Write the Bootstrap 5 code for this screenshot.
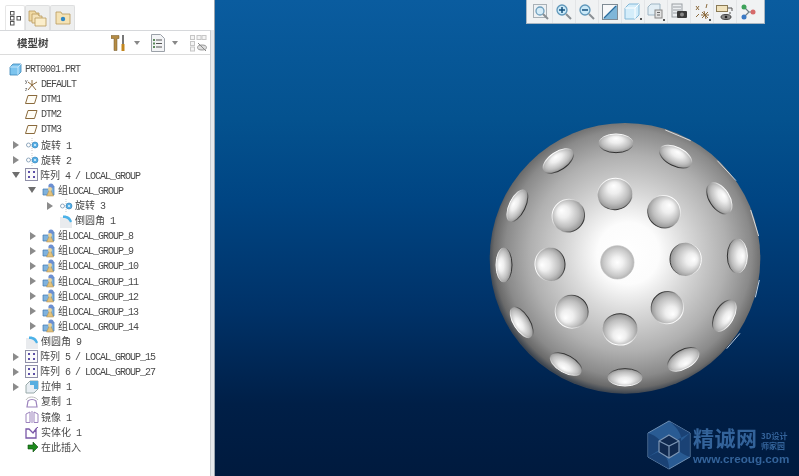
<!doctype html>
<html lang="zh"><head><meta charset="utf-8">
<link href="https://cdn.jsdelivr.net/npm/bootstrap@5.3.0/dist/css/bootstrap.min.css" rel="stylesheet">
<style>
html,body{height:100%;margin:0;overflow:hidden}
.app-shell{width:799px;height:476px;background:#fff}
.side-pane{width:215px;background:#e6e9ec;border-right:1px solid #9aa4ae}
.tab-strip{height:30px;padding:5px 0 0 5px;background:#fff}
.tab-item{width:25px;height:25px;background:#eeefef;border:1px solid #dedfe0;border-bottom:0;border-radius:2px 2px 0 0}
.tab-item.on{width:20px;background:#fff;border-color:#e6e6e6}
.pane-body{background:#fff;border-top:1px solid #d6d8db;border-right:1px solid #c9cdd1;margin-right:3px}
.head-row{height:24px;border-bottom:1px solid #dcdcdc;padding:0 3px 0 17px}
.head-title{font:700 10.5px "Noto Sans CJK SC",sans-serif;color:#444;filter:blur(.3px)}
.caret-mini{width:0;height:0;border:3px solid transparent;border-top:4px solid #888;border-bottom:0}
.gap-a{margin-right:8px}.gap-b{margin-right:11px}.gap-c{margin-right:7px}.gap-d{margin-right:11px}
.tree-list{padding-top:7px;filter:blur(.35px)}
.tree-row{height:15.12px;white-space:pre}
.lbl{font:10px/15px "Liberation Mono",monospace;letter-spacing:-1px;color:#4a4a4a}
.cjk{font:10px/15px "Noto Sans CJK SC",sans-serif;letter-spacing:0;color:#4a4a4a}
.twist{width:8px;flex:none}
.ico{flex:none}
.pad-root{padding-left:9px}.pad-icon{padding-left:25px}.pad-a{padding-left:13px}.pad-b{padding-left:30px}.pad-c{padding-left:47px}.pad-d{padding-left:59px}.pad-e{padding-left:28px}.pad-f{padding-left:12px}.pad-g{padding-left:27px}
.mr-1px{margin-right:1px}.mr-2px{margin-right:2px}.mr-3px{margin-right:3px}
.ml-4px{margin-left:4px}.ml-5px{margin-left:5px}.ml-6px{margin-left:6px}
.view-pane{position:relative;background:linear-gradient(#0a5c9f 0,#04528f 25%,#004583 42%,#003268 65%,#001f47 85%,#001a3e 100%);overflow:hidden}
.tool-box{position:absolute;left:311px;top:-1px;width:239px;height:25px;background:#f0f2f3;border:1px solid #a9b6c2;padding:0 3px}
.tool-btn{width:23px;height:23px;border-right:1px solid #e3e5e7;flex:none}
.tool-btn svg{filter:blur(.25px)}
.ball{position:absolute;left:265px;top:120px;filter:blur(.5px)}
.brand{position:absolute;left:431px;top:420px;width:150px;height:50px;filter:blur(.3px)}
.brand-mark{position:absolute;left:0;top:0}
.brand-big{position:absolute;left:47px;top:5px;font:700 21px/24px "Noto Sans CJK SC",sans-serif;color:#33639a;white-space:nowrap;letter-spacing:.5px}
.brand-small{position:absolute;left:115px;top:11px;font:700 8px/10px "Noto Sans CJK SC",sans-serif;color:#33639a;white-space:nowrap}
.brand-url{position:absolute;left:47px;top:33px;font:700 11.7px/12px "Liberation Sans",sans-serif;color:#33639a}
</style></head><body>
<svg width="0" height="0" class="position-absolute"><defs>
<g id="i-grp"><path d="M1 6h6l2-3h3v9H1z" fill="#7fb2dd" stroke="#3f77b0" stroke-width=".7"/><circle cx="9" cy="3" r="2.6" fill="#6c8fd2"/><path d="M8 5.500l3.500 7.500H4.500z" fill="#e1c17c" stroke="#a88a4e" stroke-width=".5"/><circle cx="8" cy="6" r="2" fill="#e9d39b"/></g>
<g id="i-rev"><path d="M7 0v14" stroke="#bbb" stroke-dasharray="1 1" stroke-width=".8"/><circle cx="3.500" cy="7" r="2" fill="none" stroke="#8fa7bd"/><circle cx="10" cy="7" r="3" fill="#57aee3" stroke="#2d80bb" stroke-width=".6"/><circle cx="10" cy="7" r="1" fill="#e8f6ff"/></g>
<g id="i-pat"><rect x=".5" y=".5" width="12" height="12" fill="#fafafa" stroke="#8f8fa8"/><g fill="#5d4fa8"><rect x="3" y="3" width="2" height="2"/><rect x="8" y="3" width="2" height="2"/><rect x="3" y="8" width="2" height="2"/><rect x="8" y="8" width="2" height="2"/></g></g>
<g id="i-rnd"><path d="M1 3h6c3 0 5 2 6 5v6H1z" fill="#e9ebee"/><path d="M4 1.500c4-.5 8 1.500 9 6l-2 1C10 6 8 4 4 4z" fill="#4cb2e8"/></g>
<g id="i-tw"><path d="M0 0l6 4-6 4z" fill="#8b8b8b"/></g>
<g id="i-td"><path d="M0 1h8l-4 6z" fill="#6e6e6e"/></g>
<g id="i-pln"><path d="M3 1.500h9l-2.500 8h-9z" fill="#fffdf6" stroke="#8a6a3c"/></g>
</defs></svg>
<div class="app-shell d-flex">
 <div class="side-pane d-flex flex-column flex-shrink-0">
  <div class="tab-strip d-flex">
   <div class="tab-item on d-flex align-items-center justify-content-center"><svg width="13" height="16"><g fill="#fff" stroke="#555"><rect x="1.500" y="1.500" width="3.500" height="3.500"/><rect x="1.500" y="6.500" width="3.500" height="3.500"/><rect x="1.500" y="11.500" width="3.500" height="3.500"/><rect x="8" y="6.500" width="3.500" height="3.500"/></g></svg></div>
   <div class="tab-item d-flex align-items-center justify-content-center"><svg width="19" height="18"><path d="M1 2h6l1 2h3v8H1z" fill="#f0d9a3" stroke="#b99a5a" stroke-width=".8"/><path d="M4 5h6l1 2h3v7H4z" fill="#f4e2b8" stroke="#b99a5a" stroke-width=".8"/><path d="M7 9h11v8H7z" fill="#fbeecb" stroke="#b99a5a" stroke-width=".8"/></svg></div>
   <div class="tab-item d-flex align-items-center justify-content-center"><svg width="16" height="14"><path d="M1 1h5l1 2h8v10H1z" fill="#f5e3b5" stroke="#b99a5a" stroke-width=".8"/><circle cx="8" cy="8" r="2.200" fill="#2f87c5"/></svg></div>
  </div>
  <div class="pane-body flex-grow-1">
   <div class="head-row d-flex align-items-center">
    <span class="head-title flex-grow-1">模型树</span>
    <svg class="gap-a" width="15" height="18"><path d="M0 1.500h8v3H6v12H3V4.500H0z" fill="#b58c45" stroke="#6e5426" stroke-width=".5"/><path d="M11 1h2v9h-2z" fill="#777"/><path d="M10.500 10h3v7h-3z" fill="#c2861e"/></svg>
    <span class="caret-mini gap-b"></span>
    <svg class="gap-c" width="14" height="18"><path d="M.5.500h9l4 4v13H.5z" fill="#f3f4f6" stroke="#9ba1a8"/><path d="M5 6h6M5 9.500h6M5 13h6" stroke="#555"/><g fill="#5c8a5c"><rect x="2" y="5" width="2" height="2"/><rect x="2" y="8.500" width="2" height="2"/><rect x="2" y="12" width="2" height="2"/></g></svg>
    <span class="caret-mini gap-d"></span>
    <svg width="18" height="18"><g fill="#f4f4f4" stroke="#c6c6c6"><rect x="1.500" y="1.500" width="4" height="4"/><rect x="1.500" y="7.500" width="4" height="4"/><rect x="1.500" y="13" width="4" height="4"/><rect x="8" y="1.500" width="4" height="4"/><rect x="13" y="1.500" width="4" height="4"/></g><ellipse cx="13" cy="13.500" rx="4.500" ry="2.500" fill="#ddd" stroke="#999"/><path d="M9 9l8 8" stroke="#888"/></svg>
   </div>
   <div class="tree-list">
    <div class="tree-row pad-root d-flex align-items-center"><svg class="ico mr-3px" width="13" height="13"><path d="M1 4l3-3h8v8l-3 3H1z" fill="#7cc4ee" stroke="#3b87b7" stroke-width=".8"/><path d="M1 4h8v8M9 4l3-3" fill="none" stroke="#d5efff" stroke-width=".8"/></svg><span class="lbl">PRT0001.PRT</span></div>
    <div class="tree-row pad-icon d-flex align-items-center"><svg class="ico mr-1px" width="15" height="14"><path d="M7 2l0 5-4 5M7 7l5-3M7 7l4 5M3 4l4 3" stroke="#8b6a3d" fill="none"/><text x="0" y="5" font-size="5" fill="#444">y</text><text x="0" y="13" font-size="5" fill="#444">z</text></svg><span class="lbl">DEFAULT</span></div>
    <div class="tree-row pad-icon d-flex align-items-center"><svg class="ico mr-2px" width="14" height="11"><use href="#i-pln"/></svg><span class="lbl">DTM1</span></div>
    <div class="tree-row pad-icon d-flex align-items-center"><svg class="ico mr-2px" width="14" height="11"><use href="#i-pln"/></svg><span class="lbl">DTM2</span></div>
    <div class="tree-row pad-icon d-flex align-items-center"><svg class="ico mr-2px" width="14" height="11"><use href="#i-pln"/></svg><span class="lbl">DTM3</span></div>
    <div class="tree-row pad-a d-flex align-items-center"><svg class="twist" height="8"><use href="#i-tw"/></svg><svg class="ico ml-4px mr-2px" width="14" height="14"><use href="#i-rev"/></svg><span class="lbl"><span class="cjk">旋转</span> 1</span></div>
    <div class="tree-row pad-a d-flex align-items-center"><svg class="twist" height="8"><use href="#i-tw"/></svg><svg class="ico ml-4px mr-2px" width="14" height="14"><use href="#i-rev"/></svg><span class="lbl"><span class="cjk">旋转</span> 2</span></div>
    <div class="tree-row pad-f d-flex align-items-center"><svg class="twist" height="8"><use href="#i-td"/></svg><svg class="ico ml-5px mr-1px" width="14" height="14"><use href="#i-pat"/></svg><span class="lbl"><span class="cjk">阵列</span> 4 / LOCAL_GROUP</span></div>
    <div class="tree-row pad-e d-flex align-items-center"><svg class="twist" height="8"><use href="#i-td"/></svg><svg class="ico ml-6px mr-2px" width="14" height="14"><use href="#i-grp"/></svg><span class="lbl"><span class="cjk">组</span>LOCAL_GROUP</span></div>
    <div class="tree-row pad-c d-flex align-items-center"><svg class="twist" height="8"><use href="#i-tw"/></svg><svg class="ico ml-4px mr-2px" width="14" height="14"><use href="#i-rev"/></svg><span class="lbl"><span class="cjk">旋转</span> 3</span></div>
    <div class="tree-row pad-d d-flex align-items-center"><svg class="ico mr-2px" width="14" height="14"><use href="#i-rnd"/></svg><span class="lbl"><span class="cjk">倒圆角</span> 1</span></div>
    <div class="tree-row pad-b d-flex align-items-center"><svg class="twist" height="8"><use href="#i-tw"/></svg><svg class="ico ml-4px mr-2px" width="14" height="14"><use href="#i-grp"/></svg><span class="lbl"><span class="cjk">组</span>LOCAL_GROUP_8</span></div>
    <div class="tree-row pad-b d-flex align-items-center"><svg class="twist" height="8"><use href="#i-tw"/></svg><svg class="ico ml-4px mr-2px" width="14" height="14"><use href="#i-grp"/></svg><span class="lbl"><span class="cjk">组</span>LOCAL_GROUP_9</span></div>
    <div class="tree-row pad-b d-flex align-items-center"><svg class="twist" height="8"><use href="#i-tw"/></svg><svg class="ico ml-4px mr-2px" width="14" height="14"><use href="#i-grp"/></svg><span class="lbl"><span class="cjk">组</span>LOCAL_GROUP_10</span></div>
    <div class="tree-row pad-b d-flex align-items-center"><svg class="twist" height="8"><use href="#i-tw"/></svg><svg class="ico ml-4px mr-2px" width="14" height="14"><use href="#i-grp"/></svg><span class="lbl"><span class="cjk">组</span>LOCAL_GROUP_11</span></div>
    <div class="tree-row pad-b d-flex align-items-center"><svg class="twist" height="8"><use href="#i-tw"/></svg><svg class="ico ml-4px mr-2px" width="14" height="14"><use href="#i-grp"/></svg><span class="lbl"><span class="cjk">组</span>LOCAL_GROUP_12</span></div>
    <div class="tree-row pad-b d-flex align-items-center"><svg class="twist" height="8"><use href="#i-tw"/></svg><svg class="ico ml-4px mr-2px" width="14" height="14"><use href="#i-grp"/></svg><span class="lbl"><span class="cjk">组</span>LOCAL_GROUP_13</span></div>
    <div class="tree-row pad-b d-flex align-items-center"><svg class="twist" height="8"><use href="#i-tw"/></svg><svg class="ico ml-4px mr-2px" width="14" height="14"><use href="#i-grp"/></svg><span class="lbl"><span class="cjk">组</span>LOCAL_GROUP_14</span></div>
    <div class="tree-row pad-icon d-flex align-items-center"><svg class="ico mr-2px" width="14" height="14"><use href="#i-rnd"/></svg><span class="lbl"><span class="cjk">倒圆角</span> 9</span></div>
    <div class="tree-row pad-a d-flex align-items-center"><svg class="twist" height="8"><use href="#i-tw"/></svg><svg class="ico ml-4px mr-1px" width="14" height="14"><use href="#i-pat"/></svg><span class="lbl"><span class="cjk">阵列</span> 5 / LOCAL_GROUP_15</span></div>
    <div class="tree-row pad-a d-flex align-items-center"><svg class="twist" height="8"><use href="#i-tw"/></svg><svg class="ico ml-4px mr-1px" width="14" height="14"><use href="#i-pat"/></svg><span class="lbl"><span class="cjk">阵列</span> 6 / LOCAL_GROUP_27</span></div>
    <div class="tree-row pad-a d-flex align-items-center"><svg class="twist" height="8"><use href="#i-tw"/></svg><svg class="ico ml-4px mr-2px" width="14" height="14"><path d="M1 5l4-4h8v8l-4 4H1z" fill="#e8eef3" stroke="#9aa"/><path d="M5 1h8v8H9V5H5z" fill="#58aee0"/></svg><span class="lbl"><span class="cjk">拉伸</span> 1</span></div>
    <div class="tree-row pad-icon d-flex align-items-center"><svg class="ico mr-2px" width="14" height="14"><path d="M1 5c2-4 9-4 12 0" fill="none" stroke="#bbb"/><path d="M3 6c2-2 6-2 8 0l1 6H2z" fill="none" stroke="#9c83bd" stroke-width="1.200"/></svg><span class="lbl"><span class="cjk">复制</span> 1</span></div>
    <div class="tree-row pad-icon d-flex align-items-center"><svg class="ico mr-2px" width="14" height="14"><path d="M7 1v12M5 2v10.500H1V4zM9 2v10.500h4V4z" fill="none" stroke="#9c83bd"/></svg><span class="lbl"><span class="cjk">镜像</span> 1</span></div>
    <div class="tree-row pad-icon d-flex align-items-center"><svg class="ico mr-2px" width="14" height="14"><path d="M1 4v9h10V4L8 8 4 4z" fill="none" stroke="#7a58a8" stroke-width="1.300"/><path d="M11 4l2-2" stroke="#7a58a8"/></svg><span class="lbl"><span class="cjk">实体化</span> 1</span></div>
    <div class="tree-row pad-g d-flex align-items-center"><svg class="ico mr-2px" width="12" height="12"><path d="M1 4h5V1l5 5-5 5V8H1z" fill="#1d8a1d" stroke="#0c4a0c" stroke-width=".6"/></svg><span class="lbl"><span class="cjk">在此插入</span></span></div>
   </div>
  </div>
 </div>
 <div class="view-pane flex-grow-1">
  <div class="tool-box d-flex">
   <div class="tool-btn d-flex align-items-center justify-content-center"><svg width="18" height="18"><rect x="1.500" y="1.500" width="13" height="13" fill="#eef1f3" stroke="#a8b0b6"/><circle cx="8" cy="8" r="4" fill="#d5ecf8" stroke="#6f9fbd" stroke-width="1.300"/><path d="M11 11l5 5" stroke="#8a8f94" stroke-width="2"/></svg></div>
   <div class="tool-btn d-flex align-items-center justify-content-center"><svg width="18" height="18"><circle cx="7" cy="7" r="5" fill="#c9e8f7" stroke="#5f97ba" stroke-width="1.300"/><path d="M4 7h6M7 4v6" stroke="#14507e" stroke-width="1.500"/><path d="M11 11l5 5" stroke="#8a8f94" stroke-width="2"/></svg></div>
   <div class="tool-btn d-flex align-items-center justify-content-center"><svg width="18" height="18"><circle cx="7" cy="7" r="5" fill="#c9e8f7" stroke="#5f97ba" stroke-width="1.300"/><path d="M4 7h6" stroke="#14507e" stroke-width="1.500"/><path d="M11 11l5 5" stroke="#8a8f94" stroke-width="2"/></svg></div>
   <div class="tool-btn d-flex align-items-center justify-content-center"><svg width="16" height="16"><rect x=".5" y=".5" width="15" height="15" fill="#eef2f4" stroke="#7f8b94"/><path d="M1 1h14L1 15z" fill="#f7f8f9"/><path d="M15 1v14H1z" fill="#7fb6d8"/><path d="M2 14L14 2" stroke="#2a6d9f" stroke-width="1.200"/></svg></div>
   <div class="tool-btn d-flex align-items-center justify-content-center"><svg width="18" height="18"><path d="M1 5l4-4h10v11l-4 4H1z" fill="#d4edfa" stroke="#83b8d8"/><path d="M1 5h10v11M11 5l4-4" fill="none" stroke="#fff"/><path d="M16 15h2v2h-2z" fill="#555"/></svg></div>
   <div class="tool-btn d-flex align-items-center justify-content-center"><svg width="18" height="18"><path d="M1 4l3-3h9v11H1z" fill="#e2eef5" stroke="#9eb5c4"/><rect x="8" y="7" width="7" height="8" fill="#e2e2e2" stroke="#888"/><path d="M10 9.500h3M10 12h3" stroke="#666"/><path d="M16 16h2v2h-2z" fill="#555"/></svg></div>
   <div class="tool-btn d-flex align-items-center justify-content-center"><svg width="17" height="17"><rect x="1" y="1" width="10" height="13" fill="#eceff1" stroke="#9a9fa4"/><path d="M2 4h8M2 7h8M2 10h8" stroke="#9a9fa4"/><rect x="6" y="8" width="10" height="7" rx="1" fill="#3b3b3b"/><circle cx="11" cy="11.500" r="2" fill="#8a8a8a"/></svg></div>
   <div class="tool-btn d-flex align-items-center justify-content-center"><svg width="18" height="18"><path d="M6 3l-3 4M3 3l3 4M14 1l-1 4M11 8l2 8M8 12h8M9 9l6 6M15 9l-6 6M3 14l3-3" stroke="#8b6a3d" fill="none"/><path d="M16 16h2v2h-2z" fill="#555"/></svg></div>
   <div class="tool-btn d-flex align-items-center justify-content-center"><svg width="18" height="18"><rect x=".5" y="2.500" width="11" height="6" fill="#f1e3bd" stroke="#8a7a55"/><path d="M12 5h4v3" fill="none" stroke="#555"/><path d="M14 9v2" stroke="#555"/><ellipse cx="10" cy="14" rx="5" ry="2.500" fill="#888" stroke="#444"/><circle cx="10" cy="14" r="1.300" fill="#222"/></svg></div>
   <div class="tool-btn d-flex align-items-center justify-content-center border-0"><svg width="17" height="17"><path d="M4 4l5 5-5 5M9 9h4" stroke="#6f7f86" fill="none" stroke-width="1.200"/><circle cx="4" cy="4" r="2.500" fill="#3da25a"/><circle cx="4" cy="14" r="2.500" fill="#3a79c4"/><circle cx="13" cy="9" r="2.500" fill="#d66a6a"/></svg></div>
  </div>

  <svg class="ball" width="290" height="280" viewBox="0 0 870 840">
   <defs>
    <radialGradient id="bodyFill" gradientUnits="userSpaceOnUse" cx="445" cy="400" r="420">
     <stop offset="0" stop-color="#fff"/><stop offset=".22" stop-color="#fcfcfc"/><stop offset=".42" stop-color="#dadada"/><stop offset=".7" stop-color="#b0b0b0"/><stop offset=".88" stop-color="#8a8a8a"/><stop offset=".96" stop-color="#6a6a6a"/><stop offset="1" stop-color="#3e4650"/>
    </radialGradient>
    <radialGradient id="pitFill" cx=".5" cy=".5" r=".62" fx=".5" fy=".22">
     <stop offset="0" stop-color="#fff"/><stop offset=".3" stop-color="#eee"/><stop offset=".65" stop-color="#bfbfbf"/><stop offset=".9" stop-color="#8e8e8e"/><stop offset="1" stop-color="#6a6a6a"/>
    </radialGradient>
    <radialGradient id="pitMid" cx=".5" cy=".5" r=".55">
     <stop offset="0" stop-color="#fff"/><stop offset=".3" stop-color="#f1f1f1"/><stop offset=".75" stop-color="#c8c8c8"/><stop offset="1" stop-color="#a8a8a8"/>
    </radialGradient>
    <linearGradient id="pitRim" x1="0" y1="0" x2="0" y2="1">
     <stop offset="0" stop-color="#fff"/><stop offset=".35" stop-color="#fff" stop-opacity=".3"/><stop offset=".55" stop-color="#888" stop-opacity="0"/><stop offset=".75" stop-color="#333" stop-opacity=".45"/><stop offset="1" stop-color="#222" stop-opacity=".9"/>
    </linearGradient>
   </defs>
   <circle cx="435" cy="415" r="406" fill="url(#bodyFill)"/>
   <g fill="url(#pitFill)" stroke="url(#pitRim)" stroke-width="3">
    <ellipse rx="52" ry="28" transform="translate(408 70)"/>
    <ellipse rx="52" ry="28" transform="translate(587 110) rotate(26)"/>
    <ellipse rx="52" ry="27" transform="translate(235 123) rotate(-34)"/>
    <ellipse rx="52" ry="24" transform="translate(112 257) rotate(-64)"/>
    <ellipse rx="52" ry="30" transform="translate(718 235) rotate(57)"/>
    <ellipse rx="52" ry="24" transform="translate(72 435) rotate(-90)"/>
    <ellipse rx="52" ry="30" transform="translate(772 408) rotate(90)"/>
    <ellipse rx="52" ry="24" transform="translate(125 607) rotate(-122)"/>
    <ellipse rx="52" ry="28" transform="translate(733 587) rotate(120)"/>
    <ellipse rx="52" ry="26" transform="translate(258 732) rotate(-151)"/>
    <ellipse rx="52" ry="28" transform="translate(610 718) rotate(150)"/>
    <ellipse rx="52" ry="26" transform="translate(435 772) rotate(180)"/>
    <ellipse rx="52" ry="47" transform="translate(405 222) rotate(-9)"/>
    <ellipse rx="50" ry="48" transform="translate(265 287) rotate(-53)"/>
    <ellipse rx="50" ry="48" transform="translate(552 275) rotate(40)"/>
    <ellipse rx="50" ry="45" transform="translate(210 433) rotate(-95)"/>
    <ellipse rx="50" ry="47" transform="translate(617 418) rotate(90)"/>
    <ellipse rx="50" ry="49" transform="translate(275 575) rotate(-135)"/>
    <ellipse rx="49" ry="48" transform="translate(562 563) rotate(139)"/>
    <ellipse rx="52" ry="47" transform="translate(420 628) rotate(184)"/>
   </g>
   <ellipse cx="412" cy="427" rx="50" ry="50" fill="url(#pitMid)" stroke="#bcbcbc" stroke-width="2"/>
   <path d="M556 30l76 32M712 122l56 60M812 270l24 78M838 480l-12 52M780 640l-40 46" fill="none" stroke="#e9edf0" stroke-width="2.500"/>
  </svg>

  <div class="brand">
   <svg class="brand-mark" width="46" height="50" viewBox="0 0 46 50"><path d="M23 1l21 12v24L23 49 2 37V13z" fill="#295b93" stroke="#6d8fb4"/><path d="M23 1c10 8 13 15 12 20l9-8zM44 37c-11-4-16-9-17-15l17-9zM23 49c0-8-3-14-9-18l-12 6zM2 13c9 3 14 8 16 14L2 37z" fill="#16396b" opacity=".75"/><path d="M23 15l10 6v11l-10 6-10-6V21z" fill="#10294f" stroke="#7d96b5" stroke-width="1.200"/><path d="M13 21l10 5 10-5M23 26v12" fill="none" stroke="#7d96b5" stroke-width="1.200"/></svg>
   <span class="brand-big">精诚网</span>
   <span class="brand-small">3D设计<br>师家园</span>
   <span class="brand-url">www.creoug.com</span>
  </div>
 </div>
</div>
<script src="https://cdn.jsdelivr.net/npm/bootstrap@5.3.0/dist/js/bootstrap.bundle.min.js"></script>
</body></html>
